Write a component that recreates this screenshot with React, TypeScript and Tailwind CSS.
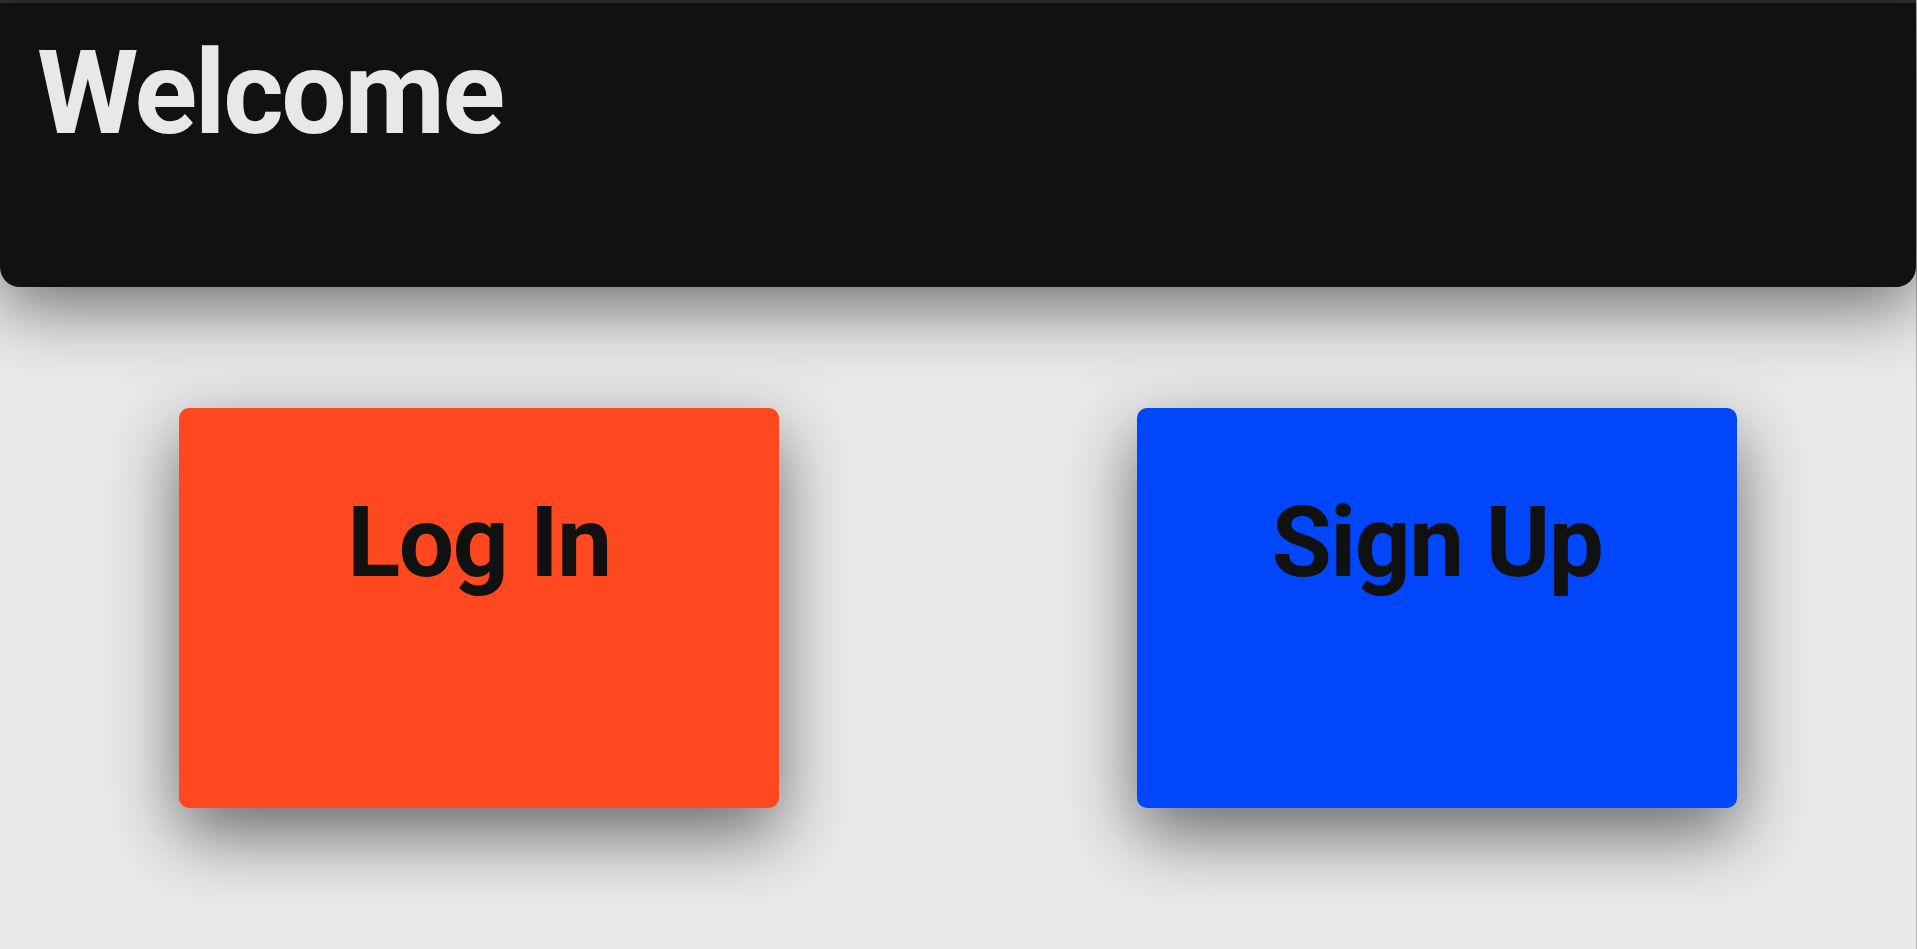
import React from "react";

export default function App() {
  const font = { fontFamily: "Roboto, 'Liberation Sans', sans-serif" };
  return (
    <div
      className="min-h-[949px] w-full bg-[#e9e9e9] flex flex-col border-r border-r-[#80808080]"
      style={font}
    >
      <div className="h-[3px] bg-[#2f2f2f]" />
      <header className="relative z-10 h-[284px] bg-[#111111] rounded-b-[20px] shadow-[0_18px_70px_rgba(0,0,0,0.55)] pl-[37px] pt-[32px]">
        <h1 className="text-[116px] leading-none font-bold tracking-[-0.02em] text-[#e8e8e8]">
          Welcome
        </h1>
      </header>
      <main className="flex justify-around pt-[121px]">
        <button className="w-[600px] h-[400px] rounded-[10px] bg-[#ff4820] shadow-[0_26px_70px_rgba(0,0,0,0.55)] flex flex-col items-center pt-[86px]">
          <span className="text-[98px] leading-none font-bold tracking-[-0.015em] text-[#111111]">Log In</span>
        </button>
        <button className="w-[600px] h-[400px] rounded-[10px] bg-[#0046fa] shadow-[0_26px_70px_rgba(0,0,0,0.55)] flex flex-col items-center pt-[86px]">
          <span className="text-[98px] leading-none font-bold tracking-[-0.015em] text-[#111111]">Sign Up</span>
        </button>
      </main>
    </div>
  );
}
